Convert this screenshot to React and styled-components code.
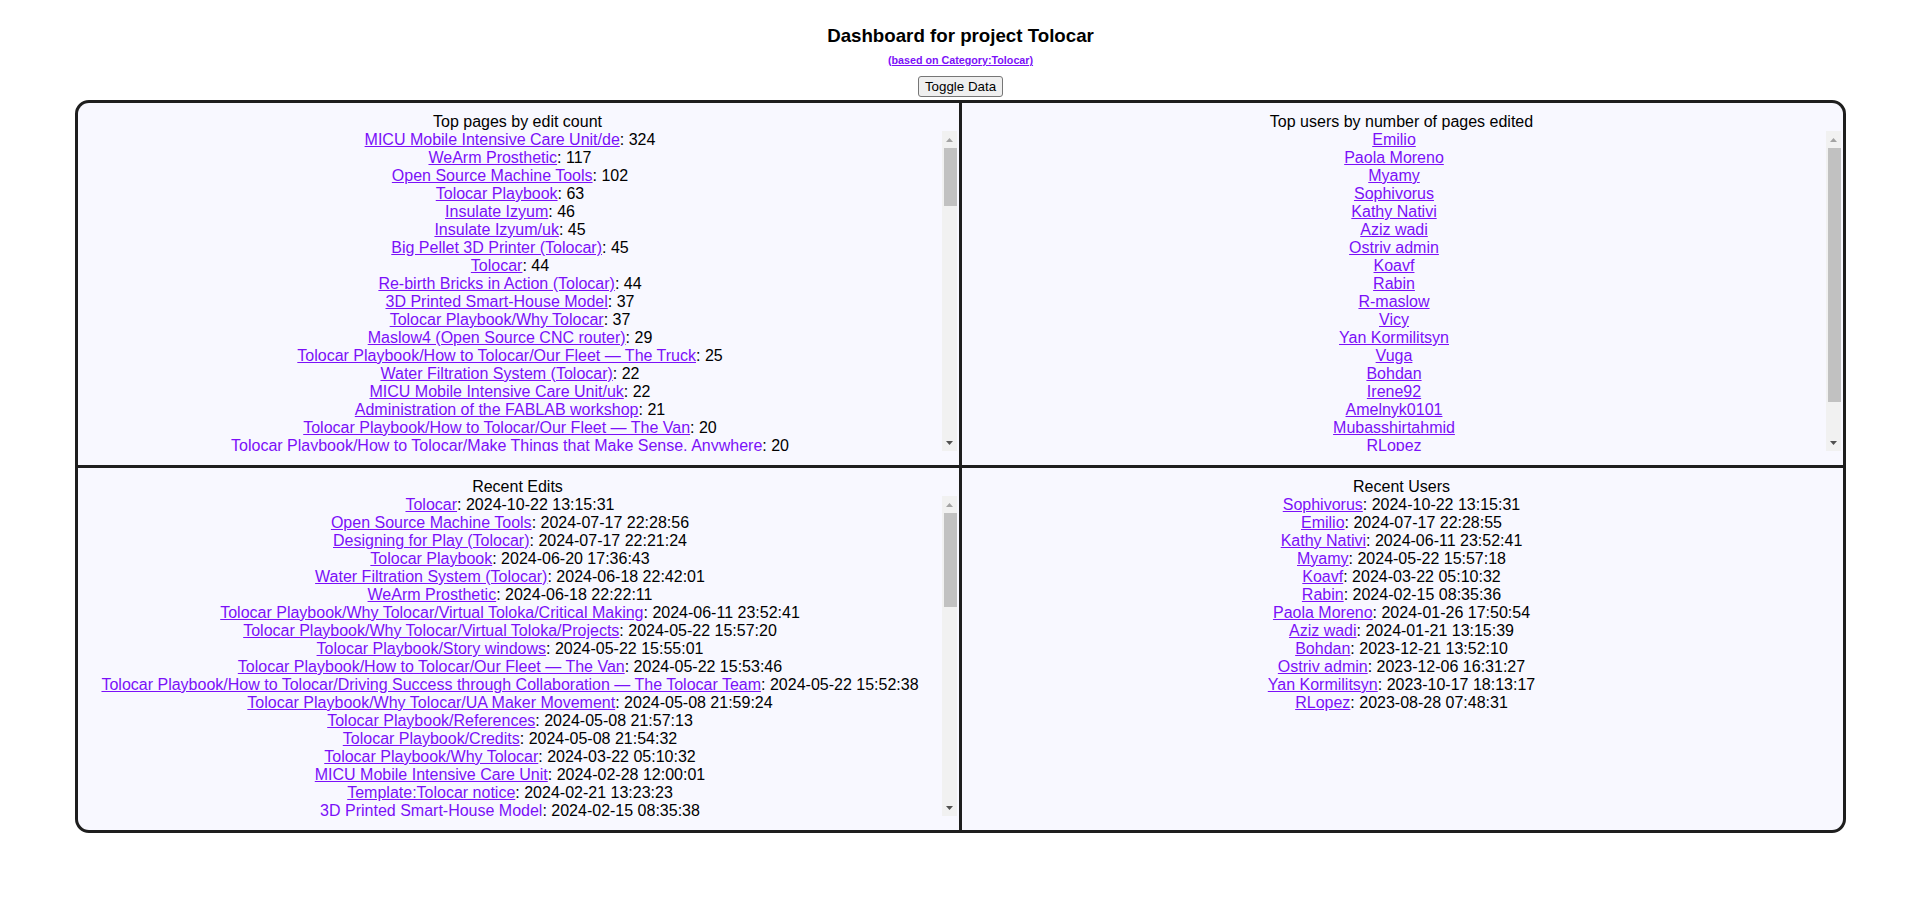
import React, { useLayoutEffect, useRef, useState } from "react";
import styled, { createGlobalStyle } from "styled-components";

const GlobalStyle = createGlobalStyle`
  body {
    margin: 0;
    background: #ffffff;
    color: #000000;
    font-family: "Liberation Sans", Arial, sans-serif;
  }
`;

// pages that sit below the visible part of the scroll boxes
const morePages = [
  "Tolocar Playbook/How to Tolocar",
  "Tolocar Playbook/Why Tolocar/Virtual Toloka",
  "Tolocar Playbook/How to Tolocar/Our Fleet",
  "Tolocar Playbook/Why Tolocar/History",
  "Tolocar Playbook/How to Tolocar/Partners",
  "Tolocar Playbook/How to Tolocar/Our Fleet — The Trailer",
  "Solar Powered Water Pump (Tolocar)",
  "Modular Shelter Frame (Tolocar)",
  "Recycled Plastic Sheet Press (Tolocar)",
  "Mobile Makerspace Checklist",
  "Laser Cut Furniture (Tolocar)",
  "CNC Milled Window Frames",
  "Portable Power Station (Tolocar)",
  "Drone Repair Workshop (Tolocar)",
  "Tolocar Hackathon 2023",
  "Tolocar Hackathon 2024",
  "Prosthetic Hand Workshop",
  "Emergency Heater (Tolocar)",
  "Wood Stove from Recycled Steel",
  "Sandbag Filling Tool",
  "Open Source Wheelchair Ramp",
  "Rebuilding Schools Kit (Tolocar)",
  "Kharkiv Makerspace",
  "Lviv Makerspace",
  "Ostriv Makerspace",
  "Vinnytsia FabLab",
  "Izyum Community Workshop",
  "Electronics Repair Station",
  "3D Printed Splints",
  "Water Tank Cleaning Robot",
  "Open Source Beehive (Tolocar)",
  "Plastic Recycling Extruder",
  "Community Garden Planters",
  "Tolocar Workshop Safety",
  "Solar Dryer (Tolocar)",
  "Bicycle Generator",
  "Repair Café Kit",
  "Modular Bench (Tolocar)",
  "Window Insulation Film",
  "Flat-Pack Bunk Bed",
  "First Aid Kit Organizer",
  "Printed Circuit Board Milling",
  "Toy Design Workshop",
  "Tolocar Route Planning",
  "Rainwater Harvesting (Tolocar)",
  "Portable Sawmill",
  "Mobile Welding Station",
  "Clay Brick Press",
  "Open Source Ventilator Notes",
  "Tolocar Volunteers",
];

const topPages = [
  ["MICU Mobile Intensive Care Unit/de", 324],
  ["WeArm Prosthetic", 117],
  ["Open Source Machine Tools", 102],
  ["Tolocar Playbook", 63],
  ["Insulate Izyum", 46],
  ["Insulate Izyum/uk", 45],
  ["Big Pellet 3D Printer (Tolocar)", 45],
  ["Tolocar", 44],
  ["Re-birth Bricks in Action (Tolocar)", 44],
  ["3D Printed Smart-House Model", 37],
  ["Tolocar Playbook/Why Tolocar", 37],
  ["Maslow4 (Open Source CNC router)", 29],
  ["Tolocar Playbook/How to Tolocar/Our Fleet — The Truck", 25],
  ["Water Filtration System (Tolocar)", 22],
  ["MICU Mobile Intensive Care Unit/uk", 22],
  ["Administration of the FABLAB workshop", 21],
  ["Tolocar Playbook/How to Tolocar/Our Fleet — The Van", 20],
  ["Tolocar Playbook/How to Tolocar/Make Things that Make Sense, Anywhere", 20],
  ...[...morePages, ...morePages.slice(0, 19).map((p) => `${p}/uk`)].map(
    (p, i) => [p, Math.max(1, 19 - Math.floor(i / 4))]
  ),
];

const topUsers = [
  "Emilio",
  "Paola Moreno",
  "Myamy",
  "Sophivorus",
  "Kathy Nativi",
  "Aziz wadi",
  "Ostriv admin",
  "Koavf",
  "Rabin",
  "R-maslow",
  "Vicy",
  "Yan Kormilitsyn",
  "Vuga",
  "Bohdan",
  "Irene92",
  "Amelnyk0101",
  "Mubasshirtahmid",
  "RLopez",
  "Lonny Grafman",
  "Chris Watkins",
];

const stamp = (ms) => new Date(ms).toISOString().slice(0, 19).replace("T", " ");

const recentEdits = [
  ["Tolocar", "2024-10-22 13:15:31"],
  ["Open Source Machine Tools", "2024-07-17 22:28:56"],
  ["Designing for Play (Tolocar)", "2024-07-17 22:21:24"],
  ["Tolocar Playbook", "2024-06-20 17:36:43"],
  ["Water Filtration System (Tolocar)", "2024-06-18 22:42:01"],
  ["WeArm Prosthetic", "2024-06-18 22:22:11"],
  ["Tolocar Playbook/Why Tolocar/Virtual Toloka/Critical Making", "2024-06-11 23:52:41"],
  ["Tolocar Playbook/Why Tolocar/Virtual Toloka/Projects", "2024-05-22 15:57:20"],
  ["Tolocar Playbook/Story windows", "2024-05-22 15:55:01"],
  ["Tolocar Playbook/How to Tolocar/Our Fleet — The Van", "2024-05-22 15:53:46"],
  [
    "Tolocar Playbook/How to Tolocar/Driving Success through Collaboration — The Tolocar Team",
    "2024-05-22 15:52:38",
  ],
  ["Tolocar Playbook/Why Tolocar/UA Maker Movement", "2024-05-08 21:59:24"],
  ["Tolocar Playbook/References", "2024-05-08 21:57:13"],
  ["Tolocar Playbook/Credits", "2024-05-08 21:54:32"],
  ["Tolocar Playbook/Why Tolocar", "2024-03-22 05:10:32"],
  ["MICU Mobile Intensive Care Unit", "2024-02-28 12:00:01"],
  ["Template:Tolocar notice", "2024-02-21 13:23:23"],
  ["3D Printed Smart-House Model", "2024-02-15 08:35:38"],
  ...morePages
    .slice(6, 42)
    .map((p, i) => [p, stamp(Date.UTC(2024, 1, 14, 10, 12, 5) - i * 263417000)]),
];

const recentUsers = [
  ["Sophivorus", "2024-10-22 13:15:31"],
  ["Emilio", "2024-07-17 22:28:55"],
  ["Kathy Nativi", "2024-06-11 23:52:41"],
  ["Myamy", "2024-05-22 15:57:18"],
  ["Koavf", "2024-03-22 05:10:32"],
  ["Rabin", "2024-02-15 08:35:36"],
  ["Paola Moreno", "2024-01-26 17:50:54"],
  ["Aziz wadi", "2024-01-21 13:15:39"],
  ["Bohdan", "2023-12-21 13:52:10"],
  ["Ostriv admin", "2023-12-06 16:31:27"],
  ["Yan Kormilitsyn", "2023-10-17 18:13:17"],
  ["RLopez", "2023-08-28 07:48:31"],
];

const ARROW = 17;

function Panel({ title, rows }) {
  const listRef = useRef(null);
  const [bar, setBar] = useState(null);

  const measure = () => {
    const el = listRef.current;
    if (!el) return;
    const { scrollHeight, clientHeight, scrollTop } = el;
    if (scrollHeight <= clientHeight + 1) {
      setBar(null);
      return;
    }
    const track = clientHeight - ARROW * 2;
    const size = Math.max(20, (track * clientHeight) / scrollHeight);
    const top = ARROW + ((track - size) * scrollTop) / (scrollHeight - clientHeight);
    setBar({ size, top });
  };

  useLayoutEffect(measure, [rows]);

  return (
    <Cell>
      <CellTitle>{title}</CellTitle>
      <ListFrame>
        <ScrollList ref={listRef} onScroll={measure} $withBar={!!bar}>
          {rows.map(([name, value], i) => (
            <Row key={i}>
              <WikiLink href="#">{name}</WikiLink>
              {value !== undefined && `: ${value}`}
            </Row>
          ))}
        </ScrollList>
        {bar && (
          <ScrollTrack>
            <ArrowButton $at="top">
              <svg width="7" height="4" viewBox="0 0 7 4">
                <path d="M3.5 0 L7 4 L0 4 Z" fill="#a3a3a3" />
              </svg>
            </ArrowButton>
            <Thumb style={{ top: bar.top, height: bar.size }} />
            <ArrowButton $at="bottom">
              <svg width="7" height="4" viewBox="0 0 7 4">
                <path d="M0 0 L7 0 L3.5 4 Z" fill="#505050" />
              </svg>
            </ArrowButton>
          </ScrollTrack>
        )}
      </ListFrame>
    </Cell>
  );
}

function App() {
  const [showData, setShowData] = useState(true);

  return (
    <Page>
      <GlobalStyle />
      <Header>
        <Title>Dashboard for project Tolocar</Title>
        <Source>
          <WikiLink href="#">(based on Category:Tolocar)</WikiLink>
        </Source>
        <ToggleButton onClick={() => setShowData(!showData)}>Toggle Data</ToggleButton>
      </Header>
      {showData && (
        <Board>
          <Panel title="Top pages by edit count" rows={topPages} />
          <Panel title="Top users by number of pages edited" rows={topUsers.map((u) => [u])} />
          <Panel title="Recent Edits" rows={recentEdits} />
          <Panel title="Recent Users" rows={recentUsers} />
        </Board>
      )}
    </Page>
  );
}

const Page = styled.div`
  padding: 25px 0 40px 75px;
`;

const Header = styled.div`
  width: 1771px;
  display: flex;
  flex-direction: column;
  align-items: center;
  text-align: center;
`;

const Title = styled.h3`
  margin: 0;
  font-size: 18.72px;
  font-weight: bold;
`;

const Source = styled.h6`
  margin: 7px 0 0 0;
  font-size: 10.72px;
  font-weight: bold;
`;

const ToggleButton = styled.button`
  margin: 10px 0 3px 0;
  height: 21px;
  padding: 1px 6px;
  font-family: "Liberation Sans", Arial, sans-serif;
  font-size: 13.333px;
  color: #000000;
  background: #efefef;
  border: 1px solid #767676;
  border-radius: 3px;
  cursor: pointer;
`;

const Board = styled.div`
  box-sizing: border-box;
  width: 1771px;
  display: grid;
  grid-template-columns: 1fr 1fr;
  gap: 3px;
  background: #1e1e1e;
  border: 3px solid #1e1e1e;
  border-radius: 14px;
  overflow: hidden;
`;

const Cell = styled.div`
  padding: 10px 2px 14px 0;
  background: #f8f8ff;
  text-align: center;
`;

const CellTitle = styled.div`
  font-size: 16px;
`;

const ListFrame = styled.div`
  position: relative;
`;

const ScrollList = styled.div`
  max-height: 320px;
  overflow-y: auto;
  padding-right: ${(p) => (p.$withBar ? "15px" : "0")};
  scrollbar-width: none;

  &::-webkit-scrollbar {
    display: none;
  }
`;

const ScrollTrack = styled.div`
  position: absolute;
  top: 0;
  right: 0;
  bottom: 0;
  width: 15px;
  background: #f1f1f1;
  pointer-events: none;
`;

const ArrowButton = styled.div`
  position: absolute;
  left: 0;
  right: 0;
  height: ${ARROW}px;
  ${(p) => (p.$at === "top" ? "top: 0;" : "bottom: 0;")}
  display: flex;
  align-items: center;
  justify-content: center;
`;

const Thumb = styled.div`
  position: absolute;
  left: 2px;
  right: 0;
  background: #c1c1c1;
`;

const Row = styled.div`
  font-size: 16px;
  white-space: nowrap;
`;

const WikiLink = styled.a`
  color: #7b10f8;
  text-decoration: underline;
`;

export default App;
